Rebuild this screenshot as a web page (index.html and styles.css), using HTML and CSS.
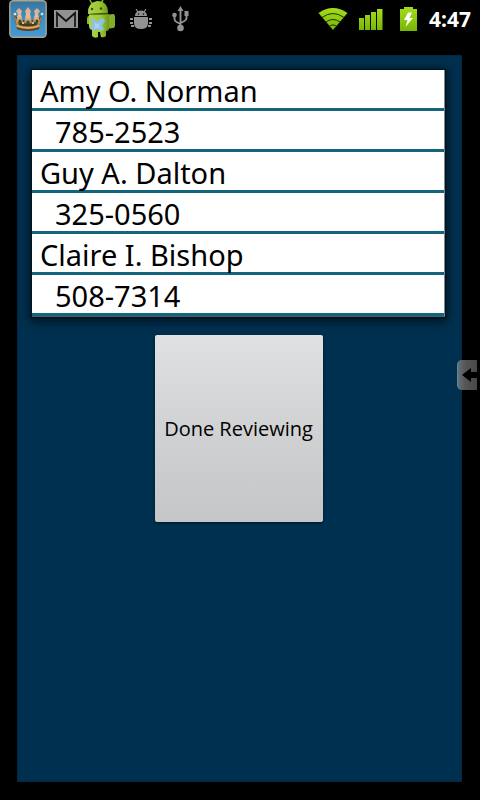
FILE: index.html
```html
<!DOCTYPE html>
<html lang="en">
<head>
<meta charset="utf-8">
<meta name="viewport" content="width=device-width, initial-scale=1">
<title>Review Contacts</title>
<link rel="stylesheet" href="styles.css">
</head>
<body>
<header class="status">
  <div class="notices">
    <svg class="crown" width="38" height="38" viewBox="0 0 38 38" aria-hidden="true">
      <defs>
        <linearGradient id="sky" x2="0" y2="1"><stop offset="0" stop-color="#3b749c"/><stop offset=".5" stop-color="#3c8fc4"/><stop offset="1" stop-color="#4799d2"/></linearGradient>
        <linearGradient id="gold" x2="0" y2="1"><stop offset="0" stop-color="#d9a98c"/><stop offset=".6" stop-color="#e6bc96"/><stop offset="1" stop-color="#b98450"/></linearGradient>
      </defs>
      <rect x=".8" y=".8" width="36.4" height="36.4" rx="3.5" fill="url(#sky)" stroke="#a9a48c" stroke-width="1.4"/>
      <path d="M5 15l6 5h16l6-5-3 14q-11 4-22 0z" fill="#5a4220"/>
      <path d="M5 14l3 7 4 2 7 1 7-1 4-2 3-7-3 14q-11 4-22 0z" fill="#b88c4c"/>
      <path d="M10 8l3 3-1 3 2 8H7l2-8-2-3zM19 7l3 4-1 3 2 9h-8l2-9-1-3zM28 8l3 3-2 3 2 8h-7l2-8-1-3z" fill="url(#gold)"/>
      <path d="M9 22q10 4 20 0l-1 3q-9 3-18 0z" fill="#4a3a1c"/>
      <path d="M7 25q12 4 24 0l-1 2q-11 4-22 0z" fill="#d9ae70"/>
      <path d="M8 27q11 4 22 0v2q-11 3-22 0z" fill="#6e3f18"/>
      <g fill="#efe0c2"><circle cx="6" cy="14" r="1.300"/><circle cx="33" cy="14" r="1.300"/><circle cx="14" cy="23" r="1"/><circle cx="24" cy="23" r="1"/></g>
      <g fill="#145a32"><circle cx="11" cy="21" r="1.500"/><circle cx="19" cy="22" r="1.600"/><circle cx="28" cy="21" r="1.500"/></g>
    </svg>
    <svg class="mail" width="24" height="18" viewBox="0 0 24 18" aria-hidden="true">
      <path fill="#929292" d="M0 0h24v18H0z"/>
      <path d="M3 17V3l9 8 9-8v14" fill="none" stroke="#111" stroke-width="1.700"/>
    </svg>
    <svg class="droid" width="30" height="38" viewBox="0 0 30 38" aria-hidden="true">
      <defs><linearGradient id="lime"><stop offset="0" stop-color="#acd548"/><stop offset=".6" stop-color="#9cc833"/><stop offset="1" stop-color="#6d991d"/></linearGradient></defs>
      <path d="M20 15l7-1q2 0 2 3v8q0 3-2 3l-7 1z" fill="#82ad28"/>
      <path d="M4 0l2 4M17 0l-2 3" stroke="#8cb72c" stroke-width="1.500"/>
      <path d="M2 14Q1 3 11 1q11 0 11 12z" fill="url(#lime)"/>
      <path d="M3 15l20-1v14q0 3-3 3v5q-2 2-5 1l-1-5h-2v5q-3 2-6-1v-6q-3-1-3-4z" fill="url(#lime)"/>
      <path d="M3 16q-2 0-2 3v4q0 2 2 1z" fill="#8cb82e"/>
      <circle cx="6" cy="9" r="1.200" fill="#37480e"/><circle cx="15" cy="8.500" r="1.200" fill="#37480e"/>
      <path d="M5 18l6 3 6-3 2 3-3 4 2 5-4 1-3-2-4 2-2-3 2-4-2-3z" fill="#8fc0ec"/>
      <path d="M8 22l3 2 3-1-1 3 1 2h-3l-3 1 1-3z" fill="#a9d0f0"/>
      <path d="M3 14.500l19-.5" stroke="#658b1d"/>
    </svg>
    <svg class="debug" width="22" height="21" viewBox="0 0 22 21" aria-hidden="true">
      <g fill="#929292">
        <path d="M5 7q0-5 6-5.500Q17 2 17 7zM4 8h14v6q0 6-7 6t-7-6z"/>
        <path d="M0 9h3v2H0zM0 13h3v2H0zM1 16h3v2H1zM19 9h3v2h-3zM19 13h3v2h-3zM18 16h3v2h-3z"/>
      </g>
      <path d="M6 0l2 3M16 0l-2 3" stroke="#929292" stroke-width="1.200"/>
      <circle cx="8.500" cy="5" r=".8"/><circle cx="13.500" cy="5" r=".8"/>
    </svg>
    <svg class="usb" width="17" height="26" viewBox="0 0 17 26" aria-hidden="true">
      <path d="M8.500 4v18M2.500 10v3q0 2 2 3l4 2M14.500 8v4q0 2-2 3l-4 2" fill="none" stroke="#929292" stroke-width="1.900"/>
      <path d="M8.500 0l3 5h-6zM12.500 5h4v5h-4z" fill="#929292"/>
      <circle cx="2.500" cy="9" r="2.300" fill="#929292"/><circle cx="8.500" cy="22" r="3.300" fill="#929292"/>
    </svg>
  </div>
  <div class="system">
    <svg class="wifi" width="30" height="24" viewBox="0 0 30 24" aria-hidden="true">
      <defs><linearGradient id="green" x2="0" y2="1"><stop offset="0" stop-color="#a4dc1c"/><stop offset="1" stop-color="#78b506"/></linearGradient></defs>
      <path d="M15 23L.5 6Q15-4 29.500 6z" fill="url(#green)"/>
      <g fill="none" stroke="#1b3000" stroke-width="1"><path d="M4 10.500q11-8 22 0M8 15q7-5 14 0M11.500 19q3.500-2.500 7 0"/></g>
    </svg>
    <svg class="signal" width="24" height="22" viewBox="0 0 24 22" aria-hidden="true">
      <path d="M0 10h5v12H0zM6 7h5v15H6zM12 4h5v18h-5zM18 1h5.500v21H18z" fill="url(#green)"/>
    </svg>
    <svg class="battery" width="17" height="24" viewBox="0 0 17 24" aria-hidden="true">
      <path d="M0 2h4V0h9v2h4v22H0z" fill="url(#green)"/>
      <path d="M8 5.500h4L9.500 11H13L5.500 20l2-7H4z" fill="#fff"/>
    </svg>
    <time class="clock">4:47</time>
  </div>
</header>
<main class="panel">
  <dl class="contacts">
    <dt>Amy O. Norman</dt><dd>785-2523</dd>
    <dt>Guy A. Dalton</dt><dd>325-0560</dd>
    <dt>Claire I. Bishop</dt><dd>508-7314</dd>
  </dl>
  <button class="done" type="button">Done Reviewing</button>
</main>
<button class="handle" type="button" aria-label="Open drawer">
  <svg width="16" height="14" viewBox="0 0 16 14" aria-hidden="true"><path d="M0 7l9-7v4h7v6H9v4z"/></svg>
</button>
</body>
</html>
```
FILE: styles.css
```css
* { box-sizing: border-box; }

body {
  margin: 0;
  min-height: 100vh;
  display: flex;
  flex-direction: column;
  background: #000;
  color: #000;
  font-family: "Noto Sans", sans-serif;
}

svg { display: block; }

.status {
  display: flex;
  justify-content: space-between;
  height: 38px;
  padding: 0 9px;
}

.notices, .system {
  display: flex;
  align-items: center;
}

.mail { margin-left: 7px; }
.droid { margin-left: 8px; }
.debug { margin-left: 14px; }
.usb { margin-left: 20px; }
.signal { margin-left: 11px; }
.battery { margin-left: 17px; }

.clock {
  margin-left: 12px;
  color: #fff;
  font-size: 21px;
  font-weight: 700;
}

.panel {
  flex: 1;
  display: flex;
  flex-direction: column;
  align-items: center;
  margin: 17px 18px 18px 17px;
  padding: 15px 17px 15px 15px;
  background: #00304f;
  box-shadow: inset 0 0 2px #001a2c;
}

.contacts {
  align-self: stretch;
  margin: 0;
  background: #fff;
  border-right: 1px solid #7c8a92;
  border-bottom: 1px solid #45606a;
  box-shadow: 0 0 1px 1px #001522, 0 2px 9px 2px #00101c;
}

.contacts dt, .contacts dd {
  height: 41px;
  margin: 0;
  padding-left: 8px;
  border-bottom: 3px solid #13647e;
  font-size: 29px;
  line-height: 42px;
  white-space: nowrap;
}

.contacts dd { padding-left: 23px; }

.done {
  width: 168px;
  height: 187px;
  margin-top: 18px;
  padding: 0;
  border: 0;
  border-radius: 2px;
  background: linear-gradient(#e0e1e2, #d2d3d4 45%, #c5c6c7);
  box-shadow: 0 1px 3px #001522;
  color: #000;
  font-family: "Open Sans", sans-serif;
  font-size: 20px;
}

.handle {
  position: absolute;
  top: 360px;
  right: 3px;
  width: 20px;
  height: 30px;
  padding: 0 0 0 4px;
  border: 0;
  border-left: 1px solid #70838e;
  border-radius: 5px 0 0 5px;
  background: linear-gradient(90deg, #60727c, #555 40%, #484848);
}
```
